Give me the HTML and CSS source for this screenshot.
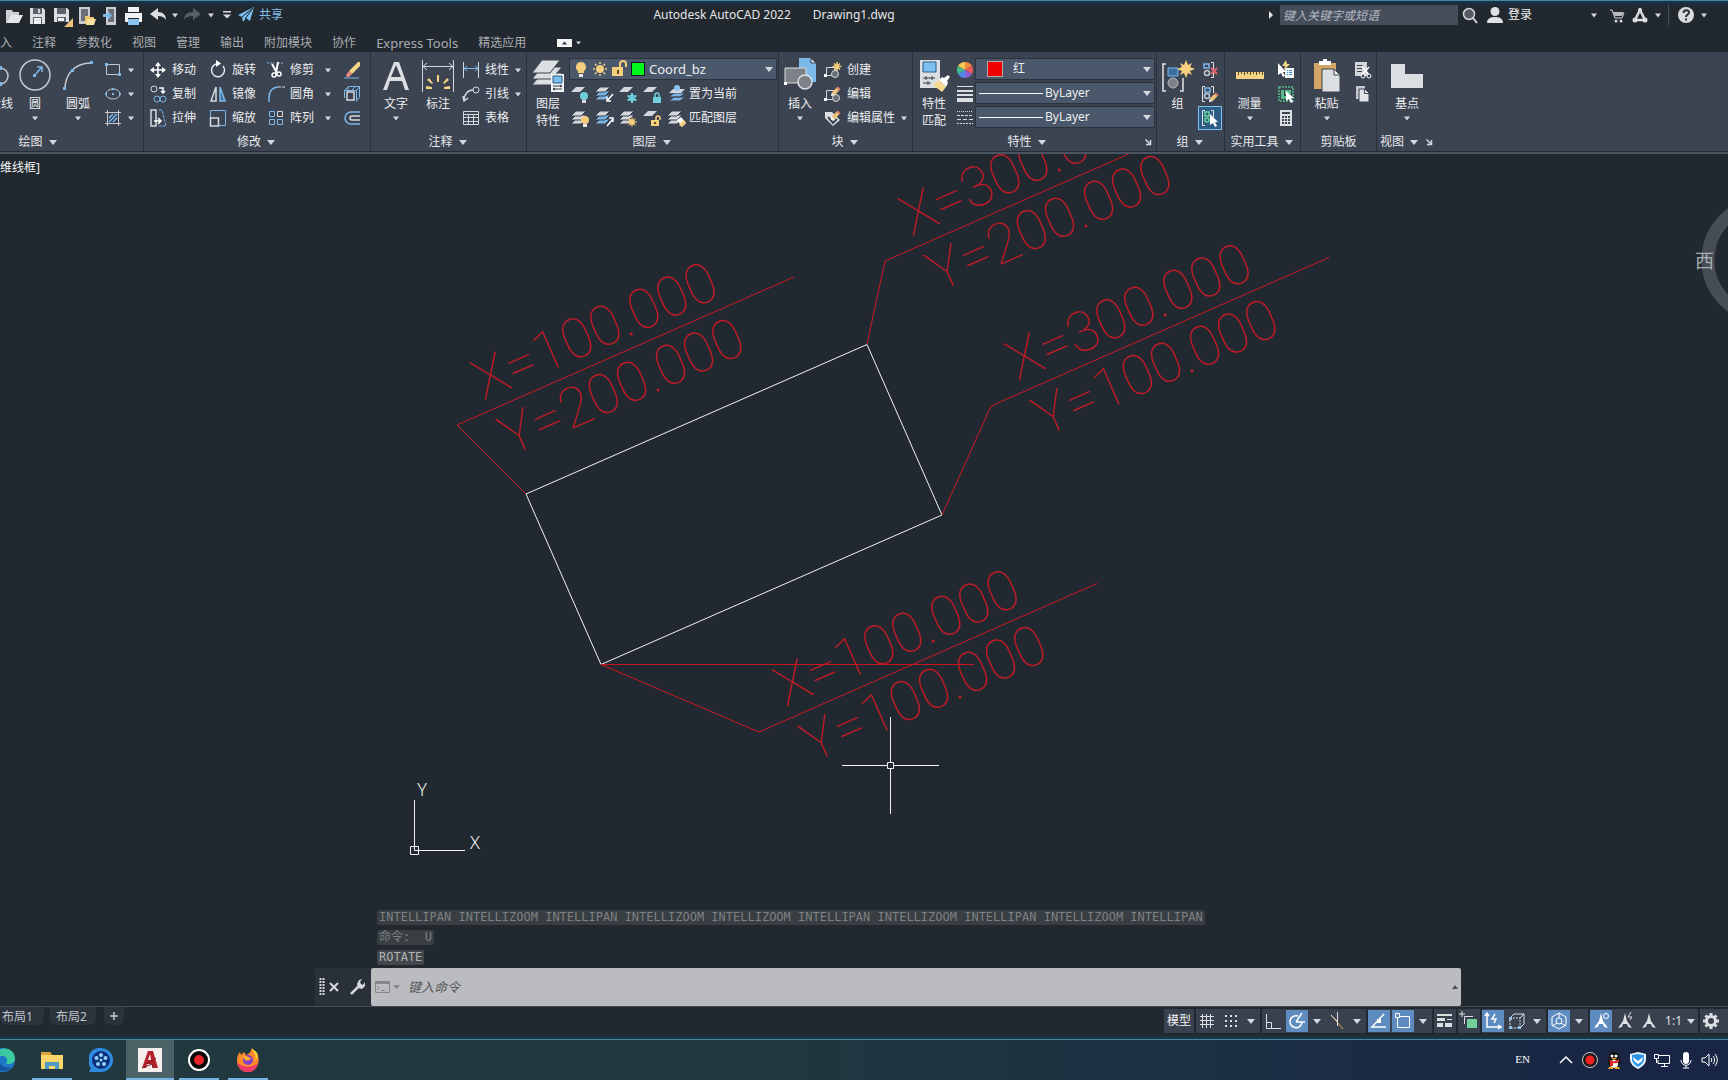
FILE: index.html
```html
<!DOCTYPE html>
<html lang="zh-CN">
<head>
<meta charset="utf-8">
<meta name="viewport" content="width=device-width, initial-scale=1">
<title>Autodesk AutoCAD 2022 - Drawing1.dwg</title>
<link rel="stylesheet" href="styles.css">
</head>
<body>
<svg class="defs" aria-hidden="true">
  <symbol id="caret" viewBox="0 0 12 12"><path d="M3 4.500h6L6 8.500z" fill="#d5d9de"/></symbol>
  <symbol id="caret-big" viewBox="0 0 12 12"><path d="M2 4h8L6 9z" fill="#d5d9de"/></symbol>
  <symbol id="launcher" viewBox="0 0 12 12"><path d="M3.500 3.500l4 4M8.500 4v4.500H4" fill="none" stroke="#d5d9de" stroke-width="1.500"/></symbol>
  <symbol id="sheets" viewBox="0 0 24 24">
    <path d="M2 18l5-5h10l-5 5z" fill="#d3d7dc" stroke="#3c4351"/>
    <path d="M2 14l5-5h10l-5 5z" fill="#d3d7dc" stroke="#3c4351"/>
    <path d="M2 10l5-5h10l-5 5z" fill="#d3d7dc" stroke="#3c4351"/>
  </symbol>
  <symbol id="sheets-blue" viewBox="0 0 24 24">
    <path d="M2 18l5-5h10l-5 5z" fill="#79b4e4" stroke="#3c4351"/>
    <path d="M2 14l5-5h10l-5 5z" fill="#79b4e4" stroke="#3c4351"/>
    <path d="M2 10l5-5h10l-5 5z" fill="#d3d7dc" stroke="#3c4351"/>
  </symbol>
  <symbol id="sheet" viewBox="0 0 24 24"><path d="M2 10l5-5h9l-5 5z" fill="#d3d7dc"/></symbol>
  <symbol id="pencil" viewBox="0 0 12 12"><path d="M1 11l1-4 3 3z" fill="#fff"/><path d="M2 7l5-5 3 3-5 5z" fill="#efc27c"/><path d="M7 2l1.500-1.500 3 3L10 5z" fill="#e08a6e"/></symbol>
  <symbol id="person-a" viewBox="0 0 22 22"><path d="M11 3l2 8 5 7-4-1-1-3h-4l-1 3-4 1 5-7z" fill="currentColor"/></symbol>
</svg>

<div class="app">
  <header class="titlebar">
    <div class="quick">
      <button class="ico" aria-label="打开"><svg viewBox="0 0 24 24"><path d="M5 20V7h6l1 2h6v3H9z" fill="#cdd0d4"/><path d="M9 12h13l-4 8H5z" fill="#e4e6e8"/></svg></button>
      <button class="ico" aria-label="保存"><svg viewBox="0 0 24 24"><path d="M5 5h13l2 2v14H5z" fill="#dcdee1"/><path d="M8 5h9v6H8zM8 14h9v7H8z" fill="#5b626c"/><path d="M9 15h7v6H9z" fill="#f2f3f4"/><path d="M13 6h2v4h-2zM10 17h5v1h-5z" fill="#d0d3d7"/></svg></button>
      <button class="ico" aria-label="另存为"><svg viewBox="0 0 24 24"><path d="M5 5h13l2 2v12H5z" fill="#dcdee1"/><path d="M8 5h9v6H8zM8 14h9v5H8z" fill="#5b626c"/><path d="M9 15h6v3H9z" fill="#f2f3f4"/><svg x="11" y="10" width="12" height="12" viewBox="0 0 12 12"><path d="M1 11l1-4 3 3z" fill="#fff"/><path d="M2 7l5-5 3 3-5 5z" fill="#efc27c"/><path d="M7 2l1.500-1.500 3 3L10 5z" fill="#e08a6e"/></svg></svg></button>
      <button class="ico" aria-label="从移动端打开"><svg viewBox="0 0 24 24"><path d="M6 4h11v17H6z" fill="#c9ccd0"/><path d="M8 6h7v12H8z" fill="#6a6f77"/><path d="M12 21v-8h4l1 1h4v7z" fill="#efc572"/><path d="M14 16h9l-2 6h-8z" fill="#fbe0a0"/></svg></button>
      <button class="ico" aria-label="保存到移动端"><svg viewBox="0 0 24 24"><path d="M9 4h10v18H9z" fill="#c9ccd0"/><path d="M11 6h6v13h-6z" fill="#6a6f77"/><path d="M6 11h5V8l4 4.500-4 4.500v-3H6z" fill="#79b8ea"/></svg></button>
      <button class="ico" aria-label="打印"><svg viewBox="0 0 24 24"><path d="M7 4h11v5H7zM4 10h17v9h-3v-4H7v4H4z" fill="#f1f2f3"/><path d="M7 16h11v6H7z" fill="#8cc4ef"/></svg></button>
      <button class="ico" aria-label="放弃"><svg viewBox="0 0 24 24"><path d="M5 11l8-6v4c5 0 8 3 8 8-2-3-4-4-8-4v4z" fill="#dcdfe2"/></svg></button>
      <button class="tiny" aria-label="放弃列表"><svg><use href="#caret"/></svg></button>
      <button class="ico" aria-label="重做"><svg viewBox="0 0 24 24"><path d="M20 11l-8-6v4c-6 0-9 3-9 8 2-3 5-4 9-4v4z" fill="#565d66"/></svg></button>
      <button class="tiny" aria-label="重做列表"><svg><use href="#caret"/></svg></button>
      <button class="tiny wide" aria-label="自定义快速访问工具栏"><svg viewBox="0 0 12 12"><path d="M2 2h8v1.500H2zM2 5.500h8l-4 4z" fill="#d5d9de"/></svg></button>
      <button class="share"><svg viewBox="0 0 18 18"><path d="M1 9L17 1l-4 14-4-3-3 4-1-5z" fill="#79c0f2"/><path d="M5 11l11-9-8 11" fill="none" stroke="#21282e"/></svg>共享</button>
    </div>
    <h1 class="title"><span>Autodesk AutoCAD 2022</span><span>Drawing1.dwg</span></h1>
    <div class="account">
      <svg class="play" viewBox="0 0 12 12"><path d="M4 2l4 4-4 4z" fill="#e3e5e8"/></svg>
      <input class="search" type="text" placeholder="键入关键字或短语" aria-label="键入关键字或短语">
      <button class="ico" aria-label="搜索"><svg viewBox="0 0 24 24"><circle cx="11" cy="11" r="5.500" fill="#555b63" stroke="#d5d9de" stroke-width="1.500"/><path d="M15 15l4 5" stroke="#d5d9de" stroke-width="2"/></svg></button>
      <button class="login"><svg viewBox="0 0 18 18"><circle cx="9" cy="5.500" r="4.500" fill="#dfe2e5"/><path d="M1 17c0-5 4-6 8-6s8 1 8 6z" fill="#dfe2e5"/></svg>登录</button>
      <button class="tiny after-login" aria-label="登录选项"><svg><use href="#caret"/></svg></button>
      <button class="ico" aria-label="Autodesk App Store"><svg viewBox="0 0 24 24"><path d="M6 7h2l3 8h7l2-5H9" fill="none" stroke="#d5d9de"/><path d="M9 9h10l-1 4h-7z" fill="#b9bdc2"/><circle cx="12" cy="18" r="1.500" fill="#d5d9de"/><circle cx="17" cy="18" r="1.500" fill="#d5d9de"/></svg></button>
      <button class="ico" aria-label="Autodesk"><svg viewBox="0 0 24 24"><path d="M12 7L7 17h10z" fill="none" stroke="#dcdfe2" stroke-width="2.500"/><circle cx="12" cy="7" r="2" fill="#dcdfe2"/><circle cx="7" cy="17" r="2.500" fill="#dcdfe2"/><circle cx="17" cy="17" r="2.500" fill="#dcdfe2"/></svg></button>
      <button class="tiny" aria-label="Autodesk 菜单"><svg><use href="#caret"/></svg></button>
      <span class="rule"></span>
      <button class="ico" aria-label="帮助"><svg viewBox="0 0 24 24"><circle cx="12" cy="12" r="8" fill="#d9dcdf"/><path d="M9.500 10c0-4 5.500-3.500 5.500-.500 0 2-3 2-3 4.500M12 15.500v2" fill="none" stroke="#2a3038" stroke-width="2"/></svg></button>
      <button class="tiny" aria-label="帮助菜单"><svg><use href="#caret"/></svg></button>
    </div>
  </header>

  <nav class="tabs">
    <a href="#insert">插入</a><a href="#annotate">注释</a><a href="#parametric">参数化</a><a href="#view">视图</a><a href="#manage">管理</a><a href="#output">输出</a><a href="#addins">附加模块</a><a href="#collaborate">协作</a><a class="latin" href="#express">Express Tools</a><a href="#featured">精选应用</a>
    <button class="minimise" aria-label="最小化功能区"><svg viewBox="0 0 28 10"><path d="M0 1h15v8H0z" fill="#f4f5f6"/><path d="M5 6.500h5L7.500 3.500z" fill="#2a3038"/><path d="M19 3.500h5l-2.500 3z" fill="#d5d9de"/></svg></button>
  </nav>

  <div class="ribbon">
    <section class="panel p-draw">
      <div class="body">
        <button class="big w40 first"><svg viewBox="0 0 36 34"><path d="M4 10h19a8 8 0 010 16H4" fill="none" stroke="#c5c9cf" stroke-width="1.500"/><path d="M21 8h4v4h-4zM21 24h4v4h-4z" fill="#7db8ea"/></svg><span>多段线</span></button>
        <button class="big w40"><svg viewBox="0 0 36 34"><circle cx="18" cy="17" r="15" fill="none" stroke="#c5c9cf" stroke-width="1.500"/><path d="M17 18l7-8M20 9h5v5" fill="none" stroke="#7db8ea" stroke-width="1.500"/><path d="M16 16h3v3h-3z" fill="#7db8ea"/></svg><span>圆</span><svg class="c"><use href="#caret"/></svg></button>
        <button class="big w46"><svg viewBox="0 0 36 34"><path d="M5 31C5 17 14 5 31 5" fill="none" stroke="#c5c9cf" stroke-width="1.500"/><path d="M3 29h3v3H3zM11 11h3v3h-3zM30 3h3v3h-3z" fill="#7db8ea"/></svg><span>圆弧</span><svg class="c"><use href="#caret"/></svg></button>
        <div class="rows">
          <button class="row" aria-label="矩形"><svg viewBox="0 0 24 24"><path d="M5.500 6.500h13v10h-13z" fill="none" stroke="#c5c9cf"/><path d="M4 5h3v3H4zM17 15h3v3h-3z" fill="#7db8ea"/></svg><svg class="c"><use href="#caret"/></svg></button>
          <button class="row" aria-label="椭圆"><svg viewBox="0 0 24 24"><ellipse cx="12" cy="12" rx="7" ry="5" fill="none" stroke="#c5c9cf"/><path d="M11 11h2v2h-2zM4 11h2v2H4zM18 11h2v2h-2zM11 6h2v2h-2z" fill="#7db8ea"/></svg><svg class="c"><use href="#caret"/></svg></button>
          <button class="row" aria-label="图案填充"><svg viewBox="0 0 24 24"><path d="M6.500 4v16M17.500 4v16M4 6.500h16M4 17.500h16" stroke="#c5c9cf"/><path d="M8 12l4-4M8 16l8-8M12 16l4-4" stroke="#7db8ea" stroke-width="1.500"/></svg><svg class="c"><use href="#caret"/></svg></button>
        </div>
      </div>
      <button class="ptitle">绘图<svg><use href="#caret-big"/></svg></button>
    </section>

    <section class="panel p-modify">
      <div class="body">
        <div class="rows w60">
          <button class="row"><svg viewBox="0 0 24 24"><path d="M12 5v14M5 12h14" stroke="#fff" stroke-width="1.500"/><path d="M12 4l3 4H9zM12 20l3-4H9zM4 12l4-3v6zM20 12l-4-3v6z" fill="#fff"/></svg>移动</button>
          <button class="row"><svg viewBox="0 0 24 24"><circle cx="8" cy="7" r="3" fill="none" stroke="#d5d9de"/><path d="M13 6h4v4M15 9l2 2 2-2" fill="none" stroke="#fff" stroke-width="1.500"/><circle cx="11" cy="17" r="3" fill="none" stroke="#7db8ea"/><circle cx="17" cy="17" r="3" fill="none" stroke="#7db8ea"/></svg>复制</button>
          <button class="row"><svg viewBox="0 0 24 24"><path d="M5 4h5v16H5z" fill="none" stroke="#d5d9de" stroke-width="1.500"/><path d="M13 4h3l4 16h-7" fill="none" stroke="#7db8ea" stroke-dasharray="3 1"/><path d="M8 15h7M12 12l3 3-3 3" fill="none" stroke="#fff" stroke-width="1.500"/></svg>拉伸</button>
        </div>
        <div class="rows w58">
          <button class="row"><svg viewBox="0 0 24 24"><path d="M10 6a6.500 6.500 0 107 2" fill="none" stroke="#e3e5e8" stroke-width="1.500"/><path d="M10 2v7l5-3.500z" fill="#fff"/></svg>旋转</button>
          <button class="row"><svg viewBox="0 0 24 24"><path d="M10 5v14H5z" fill="none" stroke="#d5d9de" stroke-width="1.500"/><path d="M14 5v14h5z" fill="#3f6e96" stroke="#7db8ea" stroke-width="1.500"/></svg>镜像</button>
          <button class="row"><svg viewBox="0 0 24 24"><path d="M4.500 12V4.500h15v15H13" fill="none" stroke="#7db8ea"/><path d="M4.500 12h8v8h-8z" fill="none" stroke="#d5d9de" stroke-width="1.500"/></svg>缩放</button>
        </div>
        <div class="rows w76">
          <button class="row"><svg viewBox="0 0 24 24"><path d="M3 5h7M14 5h6" stroke="#7db8ea" stroke-dasharray="2 1"/><path d="M8 6l5 9M14 4l-2 11" stroke="#fff" stroke-width="2"/><circle cx="10" cy="17" r="2" fill="none" stroke="#fff" stroke-width="1.500"/><circle cx="15" cy="16" r="2" fill="none" stroke="#fff" stroke-width="1.500"/></svg>修剪<svg class="c end"><use href="#caret"/></svg></button>
          <button class="row"><svg viewBox="0 0 24 24"><path d="M5 20v-5C5 9 9 5 14 5" fill="none" stroke="#7db8ea" stroke-width="1.500"/><path d="M14 5h7" stroke="#d5d9de" stroke-dasharray="3 1"/></svg>圆角<svg class="c end"><use href="#caret"/></svg></button>
          <button class="row"><svg viewBox="0 0 24 24"><path d="M5.500 5.500h5v5h-5zM5.500 13.500h5v5h-5zM13.500 13.500h5v5h-5z" fill="none" stroke="#7db8ea"/><path d="M13.500 5.500h5v5h-5z" fill="none" stroke="#d5d9de"/></svg>阵列<svg class="c end"><use href="#caret"/></svg></button>
        </div>
        <div class="rows">
          <button class="row" aria-label="删除"><svg viewBox="0 0 24 24"><path d="M4 20h15" stroke="#7db8ea"/><path d="M9 13L18 4h2v4l-8 8z" fill="#f3d485"/><path d="M9 13l3 3-3 3H7l-1-2z" fill="#e88a7e"/></svg></button>
          <button class="row" aria-label="分解"><svg viewBox="0 0 24 24"><path d="M7 10h7v8H7z" fill="none" stroke="#d5d9de" stroke-width="1.500"/><path d="M4.500 16V8.500h12v11M4.500 8.500l4-4h11v11l-3 3M16.500 8.500l3-4M8 8V5M12 8l3-3" fill="none" stroke="#7db8ea"/></svg></button>
          <button class="row" aria-label="偏移"><svg viewBox="0 0 24 24"><path d="M20 6h-9a6 6 0 000 12h9" fill="none" stroke="#7db8ea" stroke-width="1.500"/><path d="M20 10h-8a2 2 0 000 4h8" fill="none" stroke="#d5d9de" stroke-width="1.500"/></svg></button>
        </div>
      </div>
      <button class="ptitle">修改<svg><use href="#caret-big"/></svg></button>
    </section>

    <section class="panel p-annotate">
      <div class="body">
        <button class="big w42"><svg viewBox="0 0 36 34"><path d="M5 32L16 4h5l10 28h-4l-3-9H12l-3 9zM13 19h10L18 7z" fill="#dcdfe2" fill-rule="evenodd"/></svg><span>文字</span><svg class="c"><use href="#caret"/></svg></button>
        <button class="big w42"><svg viewBox="0 0 36 34"><path d="M2.500 2v32M33.500 2v32M3 8.500h30M7 5L3 8.500 7 12M29 5l4 3.500-4 3.500" fill="none" stroke="#d5d9de"/><path d="M17 17h2v7h-2zM9 20l4 5-1 1-5-4zM27 20l-4 5 1 1 5-4zM6 28l6 1v2H6zM30 28l-6 1v2h6z" fill="#f3d485"/></svg><span>标注</span></button>
        <div class="rows">
          <button class="row"><svg viewBox="0 0 24 24"><path d="M4.500 4v16M19.500 4v16" stroke="#d5d9de"/><path d="M5 10.500h14M8 8l-3 2.500L8 13M16 8l3 2.500-3 2.500" fill="none" stroke="#7db8ea"/></svg>线性<svg class="c end"><use href="#caret"/></svg></button>
          <button class="row"><svg viewBox="0 0 24 24"><path d="M5 19c0-7 4-11 9-11M4 14l1 5 4-3" fill="none" stroke="#d5d9de" stroke-width="1.500"/><circle cx="17" cy="8" r="3" fill="none" stroke="#d5d9de"/></svg>引线<svg class="c end"><use href="#caret"/></svg></button>
          <button class="row"><svg viewBox="0 0 24 24"><path d="M4.500 5.500h15v13h-15zM4 8.500h16M4 11.500h16M4 15.500h16M9.500 9v10M14.500 9v10" fill="none" stroke="#d5d9de"/></svg>表格</button>
        </div>
      </div>
      <button class="ptitle">注释<svg><use href="#caret-big"/></svg></button>
    </section>

    <section class="panel p-layers">
      <div class="body">
        <button class="big w42"><svg viewBox="0 0 36 34"><g fill="#dcdfe2" stroke="#3c4351"><path d="M2 27l10-12h20L22 27z"/><path d="M2 21L12 9h20L22 21z"/><path d="M2 15L12 2h18L20 15z"/></g><path d="M21 16h13v18H21z" fill="#f4f5f6"/><path d="M23 18h9v7h-9z" fill="#7cc0f2" stroke="#2d5a80"/><path d="M23 28h9M30 27l2 1-2 1M23 31h9M25 30l-2 1 2 1" stroke="#333a44" fill="none"/></svg><span>图层<br>特性</span></button>
        <div class="rows">
          <div class="combo layer">
            <svg viewBox="0 0 18 20"><path d="M9 3a5 5 0 013 9v2H6v-2a5 5 0 013-9z" fill="#f6cf7c"/><path d="M7 15h4v3H7z" fill="#e4e6e8"/></svg>
            <svg viewBox="0 0 18 20"><circle cx="9" cy="10" r="4" fill="#f6cf7c"/><path d="M9 3v2M9 15v2M2 10h2M14 10h2M4 5l1.500 1.500M12.500 13.500L14 15M14 5l-1.500 1.500M5.500 13.500L4 15" stroke="#f6cf7c" stroke-width="1.500"/></svg>
            <svg viewBox="0 0 18 20"><path d="M2 8h11v9H2z" fill="#f6cf7c"/><path d="M10 8V5a3 3 0 016 0v3" fill="none" stroke="#f6cf7c" stroke-width="2"/><path d="M7 11h2v4H7z" fill="#5a4a28"/></svg>
            <span class="swatch green"></span>
            <select aria-label="图层"><option>Coord_bz</option></select>
            <svg class="c"><use href="#caret-big"/></svg>
          </div>
          <div class="strip">
            <button class="row" aria-label="关闭图层"><svg viewBox="0 0 24 24"><use href="#sheet"/><circle cx="15" cy="14" r="4" fill="#6fd0dc"/><path d="M13 18h4v3h-4z" fill="#d5d9de"/></svg></button>
            <button class="row" aria-label="隔离图层"><svg viewBox="0 0 24 24"><use href="#sheets-blue"/><path d="M20 12l-6 7M14 15v4h4" fill="none" stroke="#fff" stroke-width="1.500"/></svg></button>
            <button class="row" aria-label="冻结图层"><svg viewBox="0 0 24 24"><use href="#sheet"/><path d="M15 11v10M10.500 13.500l9 5M19.500 13.500l-9 5" stroke="#6fd0dc" stroke-width="2"/><circle cx="15" cy="16" r="3" fill="none" stroke="#6fd0dc"/></svg></button>
            <button class="row" aria-label="锁定图层"><svg viewBox="0 0 24 24"><use href="#sheet"/><path d="M12 15h8v6h-8z" fill="#6fd0dc"/><path d="M14 15v-2a2 2 0 014 0v2" fill="none" stroke="#6fd0dc" stroke-width="1.500"/></svg></button>
            <button class="row"><svg viewBox="0 0 24 24"><path d="M4 19l5-4h11l-5 4zM4 15l5-4h11l-5 4z" fill="#79b4e4" stroke="#3c4351"/><path d="M4 11l4-4h12l-4 4z" fill="#d3d7dc"/><circle cx="12" cy="6" r="3" fill="#8cc4ef"/></svg>置为当前</button>
          </div>
          <div class="strip">
            <button class="row" aria-label="打开所有图层"><svg viewBox="0 0 24 24"><use href="#sheets"/><circle cx="16" cy="14" r="4" fill="#f6cf7c"/><path d="M14 18h4v3h-4z" fill="#e4e6e8"/></svg></button>
            <button class="row" aria-label="取消隔离"><svg viewBox="0 0 24 24"><use href="#sheets-blue"/><path d="M14 20l6-7M16 12h4v4" fill="none" stroke="#fff" stroke-width="1.500"/></svg></button>
            <button class="row" aria-label="解冻所有图层"><svg viewBox="0 0 24 24"><use href="#sheets"/><circle cx="15" cy="16" r="3" fill="#f6cf7c"/><path d="M15 11v10M10 16h10M11.500 12.500l7 7M18.500 12.500l-7 7" stroke="#f6cf7c"/></svg></button>
            <button class="row" aria-label="解锁图层"><svg viewBox="0 0 24 24"><use href="#sheet"/><path d="M10 14h8v6h-8z" fill="#f6cf7c"/><path d="M15 14v-2a2 2 0 014 0v2" fill="none" stroke="#f6cf7c" stroke-width="1.500"/><path d="M13 16h2v2h-2z" fill="#5a4a28"/></svg></button>
            <button class="row"><svg viewBox="0 0 24 24"><use href="#sheets"/><path d="M12 14l4-3 5 6-4 4z" fill="#fff"/><path d="M14 19l5-5 2 3-4 4z" fill="#f6cf7c"/></svg>匹配图层</button>
          </div>
        </div>
      </div>
      <button class="ptitle">图层<svg><use href="#caret-big"/></svg></button>
    </section>

    <section class="panel p-block">
      <div class="body">
        <button class="big w42"><svg viewBox="0 0 36 34"><path d="M17 0h12l5 5v19H17z" fill="#7db8ea"/><path d="M29 0v5h5z" fill="#d8ecfb" stroke="#3c4351"/><path d="M3 10h21v15H3z" fill="#7d828a" stroke="#dcdfe2"/><circle cx="23" cy="24" r="7" fill="#7d828a" stroke="#dcdfe2" stroke-width="1.500"/><path d="M2 24h3v3H2z" fill="#fff"/></svg><span>插入</span><svg class="c"><use href="#caret"/></svg></button>
        <div class="rows">
          <button class="row"><svg viewBox="0 0 24 24"><path d="M5.500 9.500h9v8h-9z" fill="none" stroke="#d5d9de"/><circle cx="14" cy="16" r="3.500" fill="#6a6f77" stroke="#d5d9de"/><path d="M3 16h3v3H3z" fill="#fff"/><path d="M16 4v9M11.500 8.500h9M13 5.500l6 6M19 5.500l-6 6" stroke="#f6cf7c" stroke-width="1.500"/></svg>创建</button>
          <button class="row"><svg viewBox="0 0 24 24"><path d="M5.500 8.500h9v9h-9z" fill="none" stroke="#d5d9de"/><circle cx="15" cy="16" r="3.500" fill="#6a6f77" stroke="#d5d9de"/><path d="M3 16h3v3H3z" fill="#fff"/><svg x="9" y="4" width="11" height="11"><use href="#pencil"/></svg></svg>编辑</button>
          <button class="row"><svg viewBox="0 0 24 24"><path d="M4 6h7l8 8-7 6-8-8z" fill="#dcdfe2"/><path d="M7 11l5 6 4-4" fill="none" stroke="#3c4351" stroke-width="2"/><svg x="9" y="4" width="11" height="11"><use href="#pencil"/></svg></svg>编辑属性<svg class="c end"><use href="#caret"/></svg></button>
        </div>
      </div>
      <button class="ptitle">块<svg><use href="#caret-big"/></svg></button>
    </section>

    <section class="panel p-props">
      <div class="body">
        <button class="big w42"><svg viewBox="0 0 36 34"><path d="M4 2h20v28H4z" fill="#dcdfe2"/><path d="M7 4h13v10H7z" fill="#7cc0f2" stroke="#2d5a80"/><path d="M7 20h12M7 25h8M10 18v4M16 18v4M12 23v4" stroke="#333a44"/><path d="M17 27l6-5 7 7-4 5z" fill="#f6d98c"/><path d="M23 22l3-3 2 1 4-3 2 2-3 4 1 2-2 4z" fill="#fff"/></svg><span>特性<br>匹配</span></button>
        <div class="rows marks">
          <svg viewBox="0 0 24 24"><path d="M12 12V4a8 8 0 017 4z" fill="#f08a3c"/><path d="M12 12l7-4a8 8 0 010 8z" fill="#e75a5a"/><path d="M12 12l7 4a8 8 0 01-7 4z" fill="#8d5ed0"/><path d="M12 12v8a8 8 0 01-7-4z" fill="#4f86ea"/><path d="M12 12l-7 4a8 8 0 010-8z" fill="#3fb98a"/><path d="M12 12L5 8a8 8 0 017-4z" fill="#f3c64f"/></svg>
          <svg viewBox="0 0 24 24"><path d="M4 4h16v1H4zM4 8h16v2H4zM4 12h16v2H4zM4 16h16v4H4z" fill="#dcdfe2"/></svg>
          <svg viewBox="0 0 24 24"><path d="M4 5.500h16" stroke="#d5d9de" stroke-dasharray="1 1"/><path d="M4 9.500h16" stroke="#d5d9de" stroke-dasharray="3 1"/><path d="M4 13.500h16" stroke="#d5d9de" stroke-dasharray="4 2"/><path d="M4 17.500h16" stroke="#d5d9de" stroke-dasharray="2 1"/></svg>
        </div>
        <div class="rows combos">
          <div class="combo colour"><span class="swatch red"></span><select aria-label="对象颜色"><option>红</option></select><svg class="c"><use href="#caret-big"/></svg></div>
          <div class="combo"><span class="line"></span><select aria-label="线宽"><option>ByLayer</option></select><svg class="c"><use href="#caret-big"/></svg></div>
          <div class="combo"><span class="line"></span><select aria-label="线型"><option>ByLayer</option></select><svg class="c"><use href="#caret-big"/></svg></div>
        </div>
      </div>
      <div class="pfoot"><button class="ptitle">特性<svg><use href="#caret-big"/></svg></button><button class="launch" aria-label="特性选项"><svg><use href="#launcher"/></svg></button></div>
    </section>

    <section class="panel p-group">
      <div class="body">
        <button class="big w42"><svg viewBox="0 0 36 34"><path d="M6 6H3v27h3M20 33h3V20" fill="none" stroke="#e3e5e8" stroke-width="1.500"/><path d="M8 10h10v8H8z" fill="#3a6f9d" stroke="#7db8ea"/><circle cx="13" cy="25" r="5" fill="#7d828a" stroke="#b9bdc2"/><path d="M26 2l2 5 4-2-2 4 5 2-5 2 2 4-4-2-2 5-2-5-4 2 2-4-5-2 5-2-2-4 4 2z" fill="#f6d07c"/></svg><span>组</span></button>
        <div class="rows">
          <button class="row" aria-label="解除编组"><svg viewBox="0 0 24 24"><path d="M6 6h5v4H6z" fill="none" stroke="#7db8ea" stroke-width="1.500"/><circle cx="9" cy="15" r="2.500" fill="none" stroke="#c5c9cf" stroke-width="1.500"/><path d="M13 4.500h2.500v15H13" fill="none" stroke="#e3e5e8"/><path d="M13 10l6 6M19 10l-6 6" stroke="#e2656a" stroke-width="2"/></svg></button>
          <button class="row" aria-label="组编辑"><svg viewBox="0 0 24 24"><path d="M7 4.500H4.500v15H7M13 4.500h2.500V11" fill="none" stroke="#e3e5e8"/><path d="M7 6h5v4H7z" fill="none" stroke="#7db8ea" stroke-width="1.500"/><circle cx="9" cy="14" r="2.500" fill="none" stroke="#c5c9cf" stroke-width="1.500"/><svg x="10" y="10" width="11" height="11"><use href="#pencil"/></svg></svg></button>
          <button class="row on" aria-label="启用组选择"><svg viewBox="0 0 24 24"><path d="M7 4.500H4.500v15H7M13 4.500h2.500V11" fill="none" stroke="#e3e5e8"/><path d="M7 6h4v4H7z" fill="none" stroke="#6cd39a" stroke-width="1.500"/><circle cx="9" cy="14" r="2" fill="none" stroke="#6cd39a" stroke-width="1.500"/><path d="M12 8v11l3-2 2 4 2-1-2-4h3z" fill="#fff"/></svg></button>
        </div>
      </div>
      <button class="ptitle">组<svg><use href="#caret-big"/></svg></button>
    </section>

    <section class="panel p-util">
      <div class="body">
        <button class="big w50"><svg viewBox="0 0 36 34"><path d="M4 14h28v7H4z" fill="#f3d485"/><path d="M6.500 14v3M9.500 14v2M12.500 14v3M15.500 14v2M18.500 14v3M21.500 14v2M24.500 14v3M27.500 14v2M30.500 14v3" stroke="#5a4a28"/></svg><span>测量</span><svg class="c"><use href="#caret"/></svg></button>
        <div class="rows">
          <button class="row" aria-label="快速选择"><svg viewBox="0 0 24 24"><path d="M12 2L8 8h3l-1 4 6-6h-3z" fill="#f3d485"/><path d="M4 5v12l3-2 2 4 2-1-2-4h3z" fill="#fff"/><path d="M11 10h9v10h-9z" fill="#f4f5f6"/><path d="M13 12.500h1M15 12.500h3M13 14.500h1M15 14.500h3M13 16.500h1M15 16.500h3" stroke="#3a8fd6"/></svg></button>
          <button class="row" aria-label="全部选择"><svg viewBox="0 0 24 24"><path d="M5 5h14v14H5z" fill="none" stroke="#56b987" stroke-width="1.500" stroke-dasharray="2 1"/><path d="M7 8h3v6h6v3H7zM11 8h6v4h-6z" fill="#56b987"/><path d="M12 9v10l3-2 2 4 2-1-2-4h3z" fill="#fff"/></svg></button>
          <button class="row" aria-label="快速计算器"><svg viewBox="0 0 24 24"><path d="M6 4h12v16H6z" fill="#dcdfe2"/><path d="M8 6h8v2H8zM8 10h2v2H8zM11 10h2v2h-2zM14 10h2v2h-2zM8 13h2v2H8zM11 13h2v2h-2zM14 13h2v2h-2zM8 16h2v2H8zM11 16h2v2h-2zM14 16h2v2h-2z" fill="#3c4351"/></svg></button>
        </div>
      </div>
      <button class="ptitle">实用工具<svg><use href="#caret-big"/></svg></button>
    </section>

    <section class="panel p-clip">
      <div class="body">
        <button class="big w50"><svg viewBox="0 0 36 34"><path d="M5 5h22v26H5z" fill="#d3a668"/><path d="M10 3h4V1h4v2h4v4H10z" fill="#fff"/><path d="M13 11h12l6 6v17H13z" fill="#dcdfe2" stroke="#3c4351"/><path d="M25 11v6h6z" fill="#f4f5f6" stroke="#3c4351"/></svg><span>粘贴</span><svg class="c"><use href="#caret"/></svg></button>
        <div class="rows">
          <button class="row" aria-label="剪切"><svg viewBox="0 0 24 24"><path d="M4 4h12v14H4z" fill="#d3d7dc"/><path d="M6 7.500h6M6 10.500h5M6 13.500h5" stroke="#3c4351"/><path d="M11 8l7 9M18 9l-7 8" stroke="#fff" stroke-width="1.500"/><circle cx="12" cy="18" r="2" fill="#3c4351" stroke="#fff"/><circle cx="18" cy="18" r="2" fill="#3c4351" stroke="#fff"/></svg></button>
          <button class="row" aria-label="复制剪裁"><svg viewBox="0 0 24 24"><path d="M5 4h9v13H5z" fill="#c5c9cf"/><path d="M8 7h6l4 4v9H8z" fill="#e3e5e8" stroke="#3c4351"/><path d="M13.500 7v4.500H18" fill="none" stroke="#3c4351"/></svg></button>
        </div>
      </div>
      <button class="ptitle">剪贴板</button>
    </section>

    <section class="panel p-view">
      <div class="body">
        <button class="big w60"><svg viewBox="0 0 36 34"><path d="M2 6h14v10h18v14H2z" fill="#dcdfe2"/></svg><span>基点</span><svg class="c"><use href="#caret"/></svg></button>
      </div>
      <div class="pfoot"><button class="ptitle">视图<svg><use href="#caret-big"/></svg></button><button class="launch" aria-label="视图选项"><svg><use href="#launcher"/></svg></button></div>
    </section>
  </div>

  <main class="canvas">
    <svg class="drawing" role="img" aria-label="Drawing1">
      <g transform="translate(0 -154)">
        <path class="shape" d="M526 494L867 344.500 942 515 601 664.500z"/>
        <path class="leader" d="M526 494L457 425 794 277M867 344L885 261 1222 113M942 515L991 406 1329 257.500M601 664.500L759 732 1097 583.500"/>
        <path class="leader flat" d="M601 664.500H974"/>
        <g class="coord" transform="translate(457 425) rotate(-23.650)"><text x="34" y="-12">X=100.000</text><text x="36" y="50">Y=200.000</text></g>
        <g class="coord" transform="translate(885 261) rotate(-23.650)"><text x="34" y="-12">X=300.000</text><text x="36" y="50">Y=200.000</text></g>
        <g class="coord" transform="translate(991 406) rotate(-23.650)"><text x="34" y="-12">X=300.000</text><text x="36" y="50">Y=100.000</text></g>
        <g class="coord" transform="translate(759 732) rotate(-23.650)"><text x="34" y="-12">X=100.000</text><text x="36" y="50">Y=100.000</text></g>
        <path class="cursor" d="M842 765.500H887M894 765.500H939M890.500 717V762M890.500 769V814M887.500 762.500h6v6h-6z"/>
        <path class="cursor" d="M414.500 800V850.500H465M410.500 846.500h8v8h-8z"/>
        <text class="axis" x="422" y="796">Y</text><text class="axis" x="475" y="849">X</text>
      </g>
    </svg>
    <div class="viewlabel">二维线框]</div>
    <div class="compass"><svg viewBox="0 0 36 128"><circle cx="73" cy="64" r="57" fill="none" stroke="#474d54" stroke-width="13"/></svg><span>西</span></div>
    <div class="command">
      <ul class="history"><li>INTELLIPAN INTELLIZOOM INTELLIPAN INTELLIZOOM INTELLIZOOM INTELLIPAN INTELLIZOOM INTELLIPAN INTELLIZOOM INTELLIPAN</li><li>命令:&nbsp; U</li><li class="last">ROTATE</li></ul>
      <div class="cmdbar">
        <div class="grip">
          <svg viewBox="0 0 6 18"><path d="M1.500 0v18M4.500 0v18" stroke="#d5d9de" stroke-width="2" stroke-dasharray="2 1"/></svg>
          <button aria-label="关闭"><svg viewBox="0 0 18 18"><path d="M5 5l8 8M13 5l-8 8" stroke="#d5d9de" stroke-width="2"/></svg></button>
          <button aria-label="自定义"><svg viewBox="0 0 18 18"><path d="M3 16l8-8" stroke="#d5d9de" stroke-width="2.500"/><path d="M9 6l2-4 3-1-2 3 1 2 2 1 2-3v4l-3 3-4-1z" fill="#d5d9de"/></svg></button>
        </div>
        <div class="field">
          <svg viewBox="0 0 30 14"><path d="M1.500 1.500h14v11h-14z" fill="none" stroke="#858789"/><path d="M1 1h15v3H1zM19 5h7l-3.500 4z" fill="#858789"/><path d="M3 6l2 2-2 2M7 10.500h4" fill="none" stroke="#858789"/></svg>
          <input type="text" placeholder="键入命令" aria-label="键入命令">
          <svg class="up" viewBox="0 0 8 8"><path d="M1 6h6L4 2z" fill="#4c5055"/></svg>
        </div>
      </div>
    </div>
  </main>

  <footer class="status">
    <div class="layouts"><a href="#layout1">布局1</a><a href="#layout2">布局2</a><button aria-label="新建布局"><svg viewBox="0 0 12 12"><path d="M6 2v8M2 6h8" stroke="#c5c9cf" stroke-width="1.500"/></svg></button></div>
    <div class="tools">
      <div class="set"><button class="model">模型</button></div>
      <div class="set">
        <button aria-label="栅格"><svg viewBox="0 0 22 22"><path d="M6.500 4v14M10.500 4v14M14.500 4v14M4 6.500h14M4 10.500h14M4 14.500h14" stroke="#dcdfe2"/></svg></button>
        <button class="m2" aria-label="捕捉"><svg viewBox="0 0 22 22"><path d="M5 6h13M5 11h13M5 16h13" stroke="#dcdfe2" stroke-width="2" stroke-dasharray="2 3"/></svg></button>
        <button class="tiny" aria-label="捕捉选项"><svg><use href="#caret-big"/></svg></button>
      </div>
      <div class="set">
        <button aria-label="正交"><svg viewBox="0 0 22 22"><path d="M4.500 4v14.500H19M4 12.500h5.500V18" fill="none" stroke="#dcdfe2"/></svg></button>
        <button class="on m2" aria-label="极轴追踪"><svg viewBox="0 0 22 22"><path d="M16 12a6 6 0 11-4-6M10 12h9M10 12l6-9" fill="none" stroke="#fff" stroke-width="1.500"/></svg></button>
        <button class="tiny" aria-label="极轴选项"><svg><use href="#caret-big"/></svg></button>
        <button aria-label="等轴测草图"><svg viewBox="0 0 22 22"><path d="M5 5l12 14" stroke="#dca94e"/><path d="M11.500 2v14M5 5l6 6" stroke="#dcdfe2"/></svg></button>
        <button class="tiny" aria-label="等轴测选项"><svg><use href="#caret-big"/></svg></button>
      </div>
      <div class="set">
        <button class="on" aria-label="对象捕捉追踪"><svg viewBox="0 0 22 22"><path d="M16 4L4 17h14" fill="none" stroke="#fff" stroke-width="1.500"/><path d="M9 9h4v4H9z" fill="#fff"/></svg></button>
        <button class="on m2" aria-label="对象捕捉"><svg viewBox="0 0 22 22"><path d="M7 6.500h10.500v11h-12V8" fill="none" stroke="#fff"/><path d="M3.500 3.500h4v4h-4z" fill="#5f8cc0" stroke="#fff"/></svg></button>
        <button class="tiny" aria-label="对象捕捉选项"><svg><use href="#caret-big"/></svg></button>
      </div>
      <div class="set"><button aria-label="线宽"><svg viewBox="0 0 22 22"><path d="M3 4h15v2H3zM3 8h8v3H3zM13 9h5v1h-5zM3 13h6v4H3zM11 13h7v4h-7z" fill="#dcdfe2"/></svg></button></div>
      <div class="set"><button aria-label="选择循环"><svg viewBox="0 0 22 22"><path d="M9 9h10v9H9z" fill="#74cf9b"/><path d="M6.500 14V6.500H15M4 1v6M1 4h6" fill="none" stroke="#dcdfe2"/></svg></button></div>
      <div class="set">
        <button class="on" aria-label="动态 UCS"><svg viewBox="0 0 22 22"><path d="M5 3v14h14M3 6l2-3 2 3M16 15l3 2-3 2M13 4l-3 5h4l-2 4" fill="none" stroke="#fff" stroke-width="1.500"/></svg></button>
        <button class="m2" aria-label="选择过滤"><svg viewBox="0 0 22 22"><path d="M4 8h10v10H4z" fill="none" stroke="#dcdfe2" stroke-dasharray="2 1"/><path d="M4 8l4-4h10v10l-4 4M14 8l4-4" fill="none" stroke="#dcdfe2"/><path d="M3 16h3v3H3zM12 16h3v3h-3zM3 7h3v3H3z" fill="#8cc4ef"/></svg></button>
        <button class="tiny" aria-label="过滤选项"><svg><use href="#caret-big"/></svg></button>
      </div>
      <div class="set">
        <button class="on" aria-label="小控件"><svg viewBox="0 0 22 22"><path d="M11 3l7 4v8l-7 4-7-4V7zM11 3v9M11 12l-7 4M11 12l7 4" fill="none" stroke="#fff"/><circle cx="11" cy="11" r="3" fill="#5f8cc0" stroke="#fff"/></svg></button>
        <button class="tiny" aria-label="小控件选项"><svg><use href="#caret-big"/></svg></button>
      </div>
      <div class="set">
        <button class="on" aria-label="注释可见性"><svg viewBox="0 0 22 22"><use href="#person-a"/><circle cx="16" cy="6" r="2.500" fill="#5f8cc0" stroke="#fff"/></svg></button>
        <button class="m2" aria-label="自动缩放"><svg viewBox="0 0 22 22"><use href="#person-a"/><path d="M17 2l-3 5h4l-2 3" fill="none" stroke="#dcdfe2"/></svg></button>
        <button class="m2" aria-label="注释比例"><svg viewBox="0 0 22 22"><use href="#person-a"/></svg></button>
        <button class="scale">1:1<svg><use href="#caret-big"/></svg></button>
      </div>
      <div class="set gear"><button aria-label="切换工作空间"><svg viewBox="0 0 22 22"><circle cx="11" cy="11" r="4.500" fill="none" stroke="#dcdfe2" stroke-width="3"/><path d="M11 3v3M11 16v3M3 11h3M16 11h3M5.500 5.500l2 2M14.500 14.500l2 2M16.500 5.500l-2 2M7.500 14.500l-2 2" stroke="#dcdfe2" stroke-width="3"/></svg></button></div>
    </div>
  </footer>

  <div class="taskbar">
    <div class="apps">
      <button class="edge" aria-label="Microsoft Edge"><svg viewBox="0 0 24 24"><circle cx="12" cy="12" r="12" fill="#1d78c8"/><path d="M1 8C5-2 24-3 24 11c0 5-7 6-9 4 3-3 0-7-4-7-5 0-8 1-10 0z" fill="#3bc9a0"/><path d="M9 12c-1 6 5 9 11 7-4 6-14 5-15-2 0-3 2-5 4-5z" fill="#1452a0"/></svg></button>
      <button class="run" aria-label="文件资源管理器"><svg viewBox="0 0 24 24"><path d="M1 4h9l2 3h11v14H1z" fill="#f9d56a"/><path d="M1 4h9l2 3H1z" fill="#d9a43a"/><path d="M5 21v-7h14v7h-4v-3H9v3z" fill="#4f9ac4"/></svg></button>
      <button aria-label="媒体播放器"><svg viewBox="0 0 24 24"><path d="M12 0a12 12 0 110 24H0l2-4A12 12 0 0112 0z" fill="#2f8be0"/><circle cx="12" cy="12" r="9" fill="#0d2f7c"/><g fill="#8fd4f7"><circle cx="12" cy="12" r="1.500"/><circle cx="12" cy="7" r="2"/><circle cx="7.500" cy="10" r="2"/><circle cx="16.500" cy="10" r="2"/><circle cx="9" cy="16" r="2"/><circle cx="15" cy="16" r="2"/></g></svg></button>
      <button class="run current" aria-label="AutoCAD"><svg viewBox="0 0 24 24"><path d="M0 0h24v24H0z" fill="#f6efee"/><path d="M4 20L10 3h5l5 17h-5l-1-4H9l-1 4zM10 12h3l-1-6z" fill="#b3202c" fill-rule="evenodd"/><path d="M4 20l10-4 1 4M9 16l9-6" fill="none" stroke="#7d1620"/></svg></button>
      <button class="run" aria-label="录屏"><svg viewBox="0 0 24 24"><circle cx="12" cy="12" r="10" fill="#090909" stroke="#fff" stroke-width="2"/><circle cx="12" cy="12" r="5" fill="#e8252b"/></svg></button>
      <button class="run" aria-label="Firefox"><svg viewBox="0 0 24 24"><path d="M12 24C5 24 1 19 1 13c0-4 1-7 3-9l1 3 3-3 2 3c3-1 5-3 6-7 2 2 3 4 4 6l1-1c2 4 2 8 1 11-2 5-5 8-10 8z" fill="#ff8a2a"/><path d="M12 24C6 24 2 20 1 14c5 6 15 6 21 1-1 6-5 9-10 9z" fill="#ee3a6a"/><path d="M15 1c4 4 6 7 4 12 2-2 3-4 2-8-1-2-3-3-6-4z" fill="#ffd93b"/><circle cx="12" cy="12" r="5" fill="#8340c9"/><path d="M7 8c4-1 5 2 8 2-1 3-5 3-6 2z" fill="#ffb02a"/></svg></button>
    </div>
    <div class="tray">
      <span class="lang">EN</span>
      <button aria-label="显示隐藏的图标"><svg viewBox="0 0 18 18"><path d="M3 12l6-6 6 6" fill="none" stroke="#fff" stroke-width="1.500"/></svg></button>
      <button aria-label="录屏"><svg viewBox="0 0 18 18"><circle cx="9" cy="9" r="7.500" fill="#1b1b1b" stroke="#c9c9c9"/><circle cx="9" cy="9" r="4.500" fill="#ee2020"/></svg></button>
      <button aria-label="QQ"><svg viewBox="0 0 18 18"><path d="M9 1c4 0 5 3 5 6l2 5-2 1-1 3H5l-1-3-2-1 2-5c0-3 1-6 5-6z" fill="#111"/><ellipse cx="9" cy="13" rx="4" ry="4" fill="#fff"/><circle cx="7" cy="5" r="1.500" fill="#fff"/><circle cx="11" cy="5" r="1.500" fill="#fff"/><path d="M6 7h6l-3 2zM4 16h4v2H3zM10 16h4l1 2h-5z" fill="#f3a21d"/><path d="M4 8c3 3 7 3 10 0v3c-3 2-5 1-6 1v3H5v-4z" fill="#dd2929"/></svg></button>
      <button aria-label="安全防护"><svg viewBox="0 0 18 18"><path d="M9 1l8 2v5c0 5-4 8-8 10-4-2-8-5-8-10V3z" fill="#e8f5ff"/><path d="M9 3l6 1v4c0 4-3 6-6 8-3-2-6-4-6-8V4z" fill="#2f93e6"/><path d="M4 6l5 4 5-4-1 4-4 3-4-3z" fill="#fff"/></svg></button>
      <button aria-label="网络"><svg viewBox="0 0 18 18"><path d="M6 4.500h10.500v8H5V9M8 15.500h7M11.500 12v3M1.500 3.500h4v4h-4zM3.500 7v5" fill="none" stroke="#fff"/></svg></button>
      <button aria-label="麦克风"><svg viewBox="0 0 18 18"><path d="M9 1a3 3 0 013 3v6a3 3 0 01-6 0V4a3 3 0 013-3z" fill="#fff"/><path d="M4 9c0 7 10 7 10 0M9 14v3M6 17h6" fill="none" stroke="#fff"/></svg></button>
      <button aria-label="音量"><svg viewBox="0 0 18 18"><path d="M1 7h3l4-4v12l-4-4H1zM10 7c1 1 1 3 0 4M12 5c2 2 2 6 0 8M14 3c3 4 3 8 0 12" fill="none" stroke="#fff"/></svg></button>
    </div>
  </div>
</div>
</body>
</html>
```
FILE: styles.css
```css
* { box-sizing: border-box; }
body {
  margin: 0;
  background: #21282f;
  color: #dde0e4;
  font: 12px/16px "Noto Sans", "Noto Sans CJK SC", sans-serif;
  overflow: hidden;
}
button, input, select {
  margin: 0;
  padding: 0;
  border: 0;
  background: none;
  color: inherit;
  font: inherit;
}
a { color: inherit; text-decoration: none; }
svg { display: block; flex: none; }
.defs { position: absolute; width: 0; height: 0; }
.app { display: flex; flex-direction: column; height: 100vh; }

/* Title bar */
.titlebar {
  display: flex;
  align-items: center;
  height: 30px;
  flex: none;
  padding-bottom: 1px;
  border-top: 1px solid #4b83a5;
  background: linear-gradient(#16344a, #21282e 6px);
}
.quick, .account { display: flex; align-items: center; height: 28px; }
.quick { padding-left: 1px; }
.ico, .ico svg { width: 24px; height: 24px; }
.tiny { width: 12px; display: flex; justify-content: center; align-items: center; }
.tiny svg { width: 12px; height: 12px; }
.tiny.wide { width: 20px; }
.share { display: flex; align-items: center; gap: 4px; color: #83bde8; white-space: nowrap; }
.share svg { width: 18px; height: 18px; }
.title {
  flex: 1;
  display: flex;
  justify-content: center;
  gap: 22px;
  margin: 0;
  padding-bottom: 1px;
  font-size: 12px;
  font-weight: 400;
  color: #e4e6e9;
  white-space: nowrap;
}
.play { width: 12px; height: 12px; margin-right: 3px; }
.search { width: 178px; height: 20px; padding: 0 3px; background: #454d5b; font-style: italic; }
.search::placeholder { color: #b5bac2; opacity: 1; }
.login { display: flex; align-items: center; gap: 4px; margin-left: 4px; color: #f1f2f4; white-space: nowrap; }
.login svg { width: 18px; height: 18px; }
.after-login { margin-left: 56px; margin-right: 4px; }
.rule { width: 1px; height: 20px; margin: 0 5px 0 4px; background: #4a515b; }
.account { padding-right: 18px; }

/* Ribbon tabs */
.tabs { display: flex; align-items: center; height: 22px; flex: none; color: #a9adb2; margin-left: -22px; padding-top: 3px; }
.tabs a { padding: 0 10px; white-space: nowrap; }
.tabs .latin { font-size: 13px; }
.minimise { margin-left: 21px; }
.minimise svg { width: 28px; height: 10px; }

/* Ribbon */
.ribbon {
  display: flex;
  flex: none;
  height: 102px;
  overflow: hidden;
  background: #3c4351;
  border-bottom: 2px solid #4b5462;
  box-shadow: inset 0 -1px #262c36;
}
.panel { display: flex; flex-direction: column; flex: none; height: 99px; border-right: 1px solid #2a303b; }
.p-draw { width: 144px; }
.p-modify { width: 227px; }
.p-annotate { width: 156px; }
.p-layers { width: 252px; }
.p-block { width: 134px; }
.p-props { width: 244px; }
.p-group { width: 68px; }
.p-util { width: 76px; }
.p-clip { width: 76px; }
.p-view { width: 76px; border: 0; }
.p-modify .body { padding-left: 2px; }
.p-annotate .body { padding-left: 4px; }
.p-clip .body { padding-left: 1px; }
.body { display: flex; height: 80px; padding-top: 6px; white-space: nowrap; }
.big { display: flex; flex-direction: column; align-items: center; flex: none; color: #eceef0; line-height: 17px; }
.big > svg:first-child { width: 36px; height: 34px; margin-bottom: 3px; }
.first { margin-left: -25px; }
.w40 { width: 40px; }
.w42 { width: 42px; }
.p-group .w42 { width: 41px; }
.w46 { width: 46px; }
.w50 { width: 49px; }
.big.w60 { width: 60px; }
.rows { display: flex; flex-direction: column; }
.rows.w60 { width: 60px; }
.rows.w58 { width: 58px; }
.rows.w76 { width: 76px; }
.row { display: flex; align-items: center; height: 24px; gap: 2px; color: #eceef0; }
.row > svg { width: 24px; height: 24px; }
.row > .c, .c { width: 12px; height: 12px; }
.p-draw .row { gap: 0; }
.end { margin-left: 5px; }
.p-modify .end { margin-left: 6px; }
.p-annotate .end { margin-left: 1px; }
.p-block .end { margin-left: 1px; }
.row.on { background: #2d5c84; box-shadow: inset 0 0 0 1px #80bdf0; }
.strip { display: flex; }
.strip .row { gap: 0; }
.combo {
  display: flex;
  align-items: center;
  height: 22px;
  margin: 0 0 2px;
  padding-right: 1px;
  background: #4b576a;
  border: 1px solid #2c333f;
  color: #eceef0;
}
.combo.layer { width: 208px; padding-left: 2px; }
.combo.layer > svg:not(.c) { width: 18px; height: 20px; margin-right: 1px; }
.combo select { flex: 1; min-width: 0; appearance: none; }
.layer select { margin-left: 4px; font-size: 13px; }
.swatch { width: 14px; height: 14px; border: 1px solid #14181d; }
.green { background: #00f81c; margin-left: 2px; }
.red { width: 16px; height: 16px; background: #f00000; border-color: #b5a4a4; margin: 0 10px 0 11px; }
.marks { width: 20px; align-items: center; }
.marks svg { width: 24px; height: 24px; }
.combos { width: 180px; }
.line { width: 64px; height: 1px; margin: 0 2px 0 3px; background: #f4f5f6; }
.ptitle {
  display: flex;
  align-items: center;
  justify-content: center;
  gap: 4px;
  flex: 1;
  color: #e6e8eb;
  white-space: nowrap;
}
.p-draw .ptitle { padding-right: 66px; }
.ptitle svg { width: 12px; height: 12px; }
.pfoot { display: flex; align-items: center; flex: 1; }
.launch svg { width: 12px; height: 12px; }
.launch { margin-right: 2px; }
.p-view .launch { margin-right: 18px; }

/* Model space */
.canvas { position: relative; flex: 1; min-height: 0; overflow: hidden; background: #21282f; }
.drawing { width: 100%; height: 100%; }
.shape, .cursor { fill: none; stroke: #f2f3f4; }
.leader { fill: none; stroke: #cc1a26; }
.flat { stroke: #c81420; }
.coord text { font: 100 56px Roboto, Lato, sans-serif; font-kerning: none; fill: #bd1c28; }
.axis { font: 300 18px "Noto Sans", sans-serif; fill: #f2f3f4; text-anchor: middle; }
.viewlabel { position: absolute; left: -12px; top: 6px; color: #f4f5f6; }
.compass { position: absolute; right: 0; top: 42px; width: 36px; height: 128px; }
.compass svg { width: 36px; height: 128px; }
.compass span { position: absolute; left: 3px; top: 53px; font-size: 19px; line-height: 24px; color: #a9adb2; }
.command { position: absolute; left: 315px; right: 267px; bottom: 0; }
.history {
  display: flex;
  flex-direction: column;
  align-items: flex-start;
  gap: 5px;
  margin: 0 0 3px 62px;
  padding: 0;
  list-style: none;
  font: 12px/15px "DejaVu Sans Mono", "Noto Sans CJK SC", monospace;
  color: #7d8184;
  white-space: nowrap;
}
.history li { height: 15px; padding: 0 2px; border-radius: 2px; background: #393e42; }
.history .last { color: #b0b3b5; background: #42474b; }
.cmdbar { display: flex; height: 38px; }
.grip { display: flex; align-items: center; width: 56px; padding-left: 4px; background: #2a303a; }
.grip > svg { width: 6px; height: 18px; }
.grip button svg { width: 18px; height: 18px; }
.grip button + button { margin-left: 5px; }
.field { flex: 1; display: flex; align-items: center; padding: 0 2px 0 3px; background: #babcbf; border-radius: 2px; }
.field svg { width: 30px; height: 14px; }
.field .up { width: 8px; height: 8px; }
.field input { flex: 1; margin-left: 4px; font-size: 13px; font-style: italic; color: #46494d; }
.field input::placeholder { color: #55585c; opacity: 1; }

/* Status bar */
.status { display: flex; justify-content: space-between; flex: none; height: 33px; border-top: 1px solid #444a50; background: linear-gradient(#21282f 27px, #183a4e); }
.layouts { display: flex; height: 18px; gap: 8px; color: #bfc3c8; }
.layouts a { width: 44px; padding: 2px 0 0 2px; background: #2c333d; border-radius: 0 0 6px 6px; white-space: nowrap; }
.layouts a + a { width: 46px; padding-left: 6px; margin-left: -2px; }
.layouts button { width: 20px; background: #2c333d; border-radius: 0 0 6px 6px; display: flex; justify-content: center; align-items: center; }
.layouts svg { width: 12px; height: 12px; }
.tools { display: flex; gap: 2px; height: 24px; margin-top: 2px; overflow: hidden; }
.set { display: flex; align-items: center; background: #3a414e; }
.set button { height: 22px; }
.set button > svg { width: 22px; height: 22px; }
.set button.tiny { width: 18px; }
.set .tiny svg, .set .scale svg { width: 12px; height: 12px; }
.set .m2 { margin-left: 2px; }
.set .on { background: #5f8cc0; color: #fff; }
.set .model { width: 30px; color: #f1f2f4; white-space: nowrap; }
.set .scale { display: flex; align-items: center; gap: 3px; padding: 0 1px 0 5px; }
.gear { width: 28px; }

/* Task bar */
.taskbar {
  display: flex;
  justify-content: space-between;
  flex: none;
  height: 41px;
  border-top: 1px solid #4589a0;
  background: linear-gradient(90deg, #20383e, #21373f 45%, #1b3043 70%, #192544 95%);
}
.apps { display: flex; gap: 1px; margin-left: -21px; }
.apps button { width: 48px; height: 40px; display: flex; justify-content: center; align-items: center; position: relative; }
.apps svg { width: 24px; height: 24px; }
.run::after { content: ""; position: absolute; left: 4px; right: 4px; bottom: 0; height: 2px; background: #76b2e2; }
.apps .current { background: #4b6267; }
.current::after { left: 0; right: 0; }
.tray { display: flex; align-items: center; gap: 6px; padding-right: 9px; }
.tray svg { width: 18px; height: 18px; }
.lang { margin-right: 21px; padding-bottom: 3px; font: 11px/16px "Liberation Serif", serif; color: #fff; }
```
